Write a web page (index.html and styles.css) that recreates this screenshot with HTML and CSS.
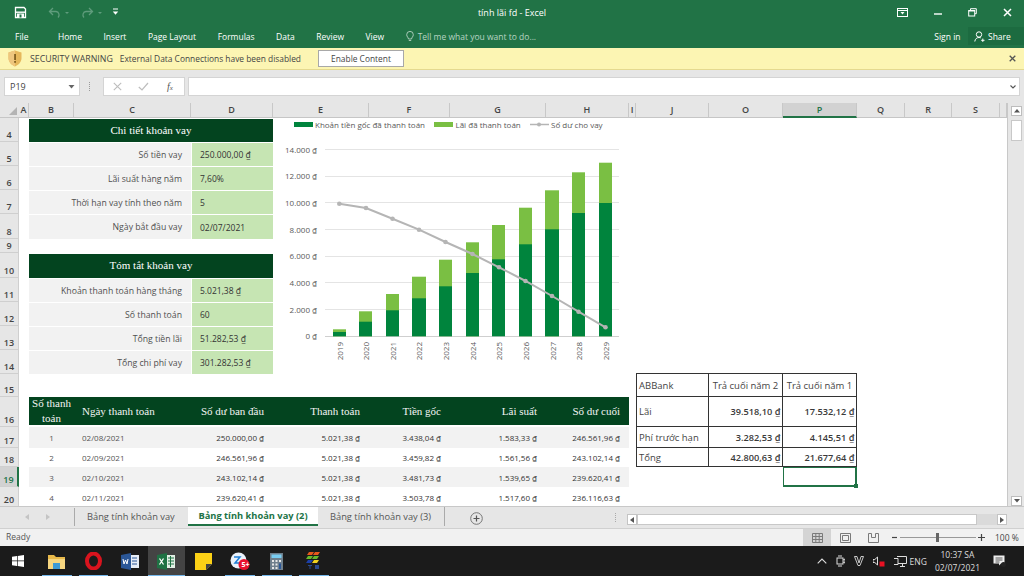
FILE: index.html
```html
<!DOCTYPE html>
<html lang="vi">
<head>
<meta charset="utf-8">
<title>tính lãi fd - Excel</title>
<link rel="stylesheet" href="styles.css">
</head>
<body>
<div class="app">
  <header class="titlebar">
    <div class="qat">
      <svg class="ico-save" width="13" height="13" viewBox="0 0 13 13"><path d="M1.500 1.500h8.500L11.500 3v8.500h-10z" fill="none" stroke="#fff" stroke-width="1.300"/><rect x="2" y="5.500" width="9" height="1.400" fill="#fff"/><rect x="3" y="7.500" width="7" height="4" fill="#fff"/><rect x="5.500" y="8.500" width="2" height="3" fill="#217346"/></svg>
      <svg class="ico-dim" width="23" height="11" viewBox="0 0 23 11"><path d="M5 1 1.500 4.500 5 8M2 4.500h6a3.500 3.500 0 0 1 2 6" fill="none" stroke="#5f9c7c" stroke-width="1.300"/><path d="M17 5h4l-2 2z" fill="#5f9c7c"/></svg>
      <svg class="ico-dim" width="23" height="11" viewBox="0 0 23 11"><path d="M8 1l3.500 3.500L8 8M11 4.500H5a3.500 3.500 0 0 0-2 6" fill="none" stroke="#5f9c7c" stroke-width="1.300"/><path d="M17 5h4l-2 2z" fill="#5f9c7c"/></svg>
      <svg class="ico-more" width="7" height="8" viewBox="0 0 7 8"><path d="M1 1h5" stroke="#fff"/><path d="M.8 3.500h5.400L3.500 6.800z" fill="#fff"/></svg>
    </div>
    <div class="doc-title">tính lãi fd - Excel</div>
    <div class="win">
      <svg width="11" height="9" viewBox="0 0 11 9"><rect x=".5" y=".5" width="10" height="8" fill="none" stroke="#fff"/><path d="M.5 2.500h10" stroke="#fff"/><path d="M3.500 4h4L5.500 6.500z" fill="#fff"/></svg>
      <svg width="8" height="9" viewBox="0 0 8 9"><path d="M0 6h8" stroke="#fff" stroke-width="1.400"/></svg>
      <svg width="9" height="9" viewBox="0 0 9 9"><path d="M2.500 2V.7h5.800v5H7" fill="none" stroke="#fff"/><rect x=".7" y="2.500" width="6" height="5.500" fill="none" stroke="#fff"/><path d="M.7 3h6" stroke="#fff"/></svg>
      <svg width="9" height="9" viewBox="0 0 9 9"><path d="M1 1l7 7M8 1 1 8" stroke="#fff" stroke-width="1.500"/></svg>
    </div>
  </header>

  <nav class="ribbon">
    <span class="rtab rtab-file">File</span>
    <span class="rtab">Home</span>
    <span class="rtab">Insert</span>
    <span class="rtab">Page Layout</span>
    <span class="rtab">Formulas</span>
    <span class="rtab">Data</span>
    <span class="rtab">Review</span>
    <span class="rtab">View</span>
    <span class="tell">
      <svg width="8" height="11" viewBox="0 0 8 11"><path d="M2.500 8C2.300 6.300.7 5.700.7 3.700a3.300 3.300 0 0 1 6.600 0C7.300 5.700 5.700 6.300 5.500 8zM2.800 9.500h2.400" fill="none" stroke="#b7d3c3" stroke-width=".9"/></svg>
      Tell me what you want to do...
    </span>
    <span class="signin">Sign in</span>
    <span class="share">
      <svg width="11" height="11" viewBox="0 0 11 11"><circle cx="5" cy="3.500" r="2.700" fill="none" stroke="#fff"/><path d="M.8 10.500C1 7.800 3 6.500 5 6.500c.8 0 1.300.2 1.800.4M7.200 9.300h3.300M8.800 7.600v3.300" fill="none" stroke="#fff"/></svg>
      Share
    </span>
  </nav>

  <div class="warn">
    <svg class="shield" width="14" height="17" viewBox="0 0 14 17"><path d="M7 .5 13.500 2.500V8c0 4-3 7-6.500 8.500C3.500 15 .5 12 .5 8V2.500z" fill="#e6b85c"/><path d="M7 .5V16.500C3.500 15 .5 12 .5 8V2.500z" fill="#eec67e"/><rect x="6.200" y="4" width="1.700" height="6" fill="#7a5a1c"/><rect x="6.200" y="11" width="1.700" height="1.800" fill="#7a5a1c"/></svg>
    <span class="warn-title">SECURITY WARNING</span>
    <span class="warn-msg">External Data Connections have been disabled</span>
    <button class="enable">Enable Content</button>
    <svg class="warn-x" width="7" height="7" viewBox="0 0 7 7"><path d="M.7.7l5.600 5.600M6.300.7.700 6.300" stroke="#555" stroke-width="1.300"/></svg>
  </div>

  <div class="fbar">
    <div class="namebox"><span>P19</span><svg width="7" height="4" viewBox="0 0 7 4"><path d="M.5 0h6L3.500 3.500z" fill="#666"/></svg></div>
    <div class="fdots"></div>
    <div class="fbtns">
      <svg width="9" height="9" viewBox="0 0 9 9"><path d="M.8.8l7.400 7.400M8.200.8.800 8.200" stroke="#bdbdbd" stroke-width="1.100"/></svg>
      <svg width="11" height="9" viewBox="0 0 11 9"><path d="M.8 5 4 8 10 1" fill="none" stroke="#bdbdbd" stroke-width="1.200"/></svg>
      <span class="fx">f<small>x</small></span>
    </div>
    <div class="finput"><svg width="6" height="4" viewBox="0 0 6 4"><path d="M.5.500 3 3 5.500.5" fill="none" stroke="#555" stroke-width="1.100"/></svg></div>
  </div>

  <div class="book">
    <div class="sheet">
      <div class="grid colhead">
        <div class="corner"><i></i></div>
        <div class="ch">A</div><div class="ch">B</div><div class="ch">C</div><div class="ch">D</div><div class="ch">E</div><div class="ch">F</div><div class="ch">G</div><div class="ch">H</div><div class="ch">I</div><div class="ch">J</div><div class="ch">O</div><div class="ch ch-sel">P</div><div class="ch">Q</div><div class="ch">R</div><div class="ch">S</div><div class="ch"></div>
      </div>

      <div class="grid h24"><div class="rh">4</div><div class="title">Chi tiết khoản vay</div></div>
      <div class="grid h24"><div class="rh">5</div><div class="lab">Số tiền vay</div><div class="val">250.000,00 ₫</div></div>
      <div class="grid h24"><div class="rh">6</div><div class="lab">Lãi suất hàng năm</div><div class="val">7,60%</div></div>
      <div class="grid h24"><div class="rh">7</div><div class="lab">Thời hạn vay tính theo năm</div><div class="val">5</div></div>
      <div class="grid h25"><div class="rh">8</div><div class="lab">Ngày bắt đầu vay</div><div class="val">02/07/2021</div></div>
      <div class="grid h14"><div class="rh">9</div></div>
      <div class="grid h25"><div class="rh">10</div><div class="title">Tóm tắt khoản vay</div></div>
      <div class="grid h24"><div class="rh">11</div><div class="lab">Khoản thanh toán hàng tháng</div><div class="val">5.021,38 ₫</div></div>
      <div class="grid h24"><div class="rh">12</div><div class="lab">Số thanh toán</div><div class="val">60</div></div>
      <div class="grid h24"><div class="rh">13</div><div class="lab">Tổng tiền lãi</div><div class="val">51.282,53 ₫</div></div>
      <div class="grid h24"><div class="rh">14</div><div class="lab">Tổng chi phí vay</div><div class="val">301.282,53 ₫</div></div>

      <div class="grid h23"><div class="rh">15</div>
        <div class="tb tb-top tb-first cj">ABBank</div><div class="tb tb-top ct co">Trả cuối năm 2</div><div class="tb tb-top ct cp">Trả cuối năm 1</div>
      </div>
      <div class="grid h30"><div class="rh">16</div>
        <div class="th cb th-c">Số thanh toán</div><div class="th cc th-l">Ngày thanh toán</div><div class="th cd">Số dư ban đầu</div><div class="th ce">Thanh toán</div><div class="th cf">Tiền gốc</div><div class="th cg">Lãi suất</div><div class="th chh">Số dư cuối</div>
        <div class="tb tb-first cj">Lãi</div><div class="tb num co">39.518,10 ₫</div><div class="tb num cp">17.532,12 ₫</div>
      </div>
      <div class="grid h21"><div class="rh">17</div>
        <div class="td z cb td-c">1</div><div class="td z cc td-l">02/08/2021</div><div class="td z cd">250.000,00 ₫</div><div class="td z ce">5.021,38 ₫</div><div class="td z cf">3.438,04 ₫</div><div class="td z cg">1.583,33 ₫</div><div class="td z chh">246.561,96 ₫</div>
        <div class="tb tb-first cj">Phí trước hạn</div><div class="tb num co">3.282,53 ₫</div><div class="tb num cp">4.145,51 ₫</div>
      </div>
      <div class="grid h19"><div class="rh">18</div>
        <div class="td cb td-c">2</div><div class="td cc td-l">02/09/2021</div><div class="td cd">246.561,96 ₫</div><div class="td ce">5.021,38 ₫</div><div class="td cf">3.459,82 ₫</div><div class="td cg">1.561,56 ₫</div><div class="td chh">243.102,14 ₫</div>
        <div class="tb tb-first cj">Tổng</div><div class="tb num co">42.800,63 ₫</div><div class="tb num cp">21.677,64 ₫</div>
      </div>
      <div class="grid h20"><div class="rh rh-sel">19</div>
        <div class="td z cb td-c">3</div><div class="td z cc td-l">02/10/2021</div><div class="td z cd">243.102,14 ₫</div><div class="td z ce">5.021,38 ₫</div><div class="td z cf">3.481,73 ₫</div><div class="td z cg">1.539,65 ₫</div><div class="td z chh">239.620,41 ₫</div>
        <div class="selcell cp"><i></i></div>
      </div>
      <div class="grid h20"><div class="rh">20</div>
        <div class="td cb td-c">4</div><div class="td cc td-l">02/11/2021</div><div class="td cd">239.620,41 ₫</div><div class="td ce">5.021,38 ₫</div><div class="td cf">3.503,78 ₫</div><div class="td cg">1.517,60 ₫</div><div class="td chh">236.116,63 ₫</div>
      </div>

      <svg class="chart" width="356" height="256" viewBox="273 118 356 256">
        <g class="leg">
          <rect x="294" y="122" width="19" height="5" fill="#00843d"/><text x="315" y="127.500">Khoản tiền gốc đã thanh toán</text>
          <rect x="434" y="122" width="19" height="5" fill="#7abf43"/><text x="455.500" y="127.500">Lãi đã thanh toán</text>
          <path d="M530 124.500h19" stroke="#b5b5b5" stroke-width="1.500"/><circle cx="539" cy="124.500" r="2" fill="#b5b5b5"/><text x="551" y="127.500">Số dư cho vay</text>
        </g>
        <g stroke="#e4e4e4" stroke-width="1">
          <path d="M325 149.500h294M325 176.500h294M325 202.500h294M325 229.500h294M325 256.500h294M325 282.500h294M325 309.500h294"/>
          <path d="M325 336.500h294" stroke="#cfcfcf"/>
        </g>
        <g class="ax" text-anchor="end">
          <text x="317" y="152.500">14.000 ₫</text><text x="317" y="179">12.000 ₫</text><text x="317" y="206">10.000 ₫</text><text x="317" y="232.500">8.000 ₫</text><text x="317" y="259">6.000 ₫</text><text x="317" y="285.500">4.000 ₫</text><text x="317" y="312.500">2.000 ₫</text><text x="317" y="339">0 ₫</text>
        </g>
        <g fill="#7abf43">
          <rect x="333" y="329.300" width="13" height="7"/><rect x="359" y="311.300" width="13" height="25"/><rect x="386" y="294" width="13" height="42"/><rect x="412" y="276.700" width="14" height="59.500"/><rect x="439" y="259.700" width="13" height="76.500"/><rect x="466" y="242.300" width="13" height="94"/><rect x="492" y="225" width="13" height="111"/><rect x="519" y="207.700" width="13" height="128.500"/><rect x="545" y="190.300" width="14" height="146"/><rect x="572" y="172.300" width="13" height="164"/><rect x="599" y="162.700" width="13" height="173.500"/>
        </g>
        <g fill="#00843d">
          <rect x="333" y="332" width="13" height="4.300"/><rect x="359" y="321.700" width="13" height="14.600"/><rect x="386" y="310.300" width="13" height="26"/><rect x="412" y="298.300" width="14" height="38"/><rect x="439" y="286.300" width="13" height="50"/><rect x="466" y="273" width="13" height="63.300"/><rect x="492" y="259.300" width="13" height="77"/><rect x="519" y="244.300" width="13" height="92"/><rect x="545" y="229.300" width="14" height="107"/><rect x="572" y="213" width="13" height="123.300"/><rect x="599" y="203" width="13" height="133.300"/>
        </g>
        <polyline points="339.300,203.700 366,208 392.500,218.700 419,229.700 445.500,242 472.500,254 499,267.300 525.500,281 552,296 578.500,311.700 605.500,327.300" fill="none" stroke="#b5b5b5" stroke-width="2"/>
        <g fill="#b5b5b5">
          <circle cx="339.300" cy="203.700" r="2.300"/><circle cx="366" cy="208" r="2.300"/><circle cx="392.500" cy="218.700" r="2.300"/><circle cx="419" cy="229.700" r="2.300"/><circle cx="445.500" cy="242" r="2.300"/><circle cx="472.500" cy="254" r="2.300"/><circle cx="499" cy="267.300" r="2.300"/><circle cx="525.500" cy="281" r="2.300"/><circle cx="552" cy="296" r="2.300"/><circle cx="578.500" cy="311.700" r="2.300"/><circle cx="605.500" cy="327.300" r="2.300"/>
        </g>
        <g class="ax" text-anchor="end">
          <text transform="translate(342.500 342) rotate(-90)">2019</text><text transform="translate(369 342) rotate(-90)">2020</text><text transform="translate(395.500 342) rotate(-90)">2021</text><text transform="translate(422 342) rotate(-90)">2022</text><text transform="translate(449 342) rotate(-90)">2023</text><text transform="translate(475.500 342) rotate(-90)">2024</text><text transform="translate(502 342) rotate(-90)">2025</text><text transform="translate(529 342) rotate(-90)">2026</text><text transform="translate(555.500 342) rotate(-90)">2027</text><text transform="translate(582 342) rotate(-90)">2028</text><text transform="translate(608.500 342) rotate(-90)">2029</text>
        </g>
      </svg>
    </div>
    <div class="vscroll">
      <div class="sbtn"><svg width="6" height="4" viewBox="0 0 6 4"><path d="M3 0l3 3.500H0z" fill="#555"/></svg></div>
      <div class="vthumb"></div>
      <div class="sbtn sbtn-end"><svg width="6" height="4" viewBox="0 0 6 4"><path d="M0 0h6L3 3.500z" fill="#555"/></svg></div>
    </div>
  </div>

  <div class="tabbar">
    <div class="tabnav">
      <svg width="4" height="6" viewBox="0 0 4 6"><path d="M4 0v6L0 3z" fill="#c4c4c4"/></svg>
      <svg width="4" height="6" viewBox="0 0 4 6"><path d="M0 0v6l4-3z" fill="#c4c4c4"/></svg>
    </div>
    <div class="stab stab-first">Bảng tính khoản vay</div>
    <div class="stab stab-on">Bảng tính khoản vay (2)</div>
    <div class="stab stab-last">Bảng tính khoản vay (3)</div>
    <svg class="addsheet" width="13" height="13" viewBox="0 0 13 13"><circle cx="6.500" cy="6.500" r="5.800" fill="none" stroke="#777"/><path d="M3.500 6.500h6M6.500 3.500v6" stroke="#555" stroke-width="1.200"/></svg>
    <div class="tabdots"></div>
    <div class="hscroll">
      <div class="hbtn"><svg width="4" height="6" viewBox="0 0 4 6"><path d="M4 0v6L0 3z" fill="#555"/></svg></div>
      <div class="hthumb"></div>
      <div class="hbtn"><svg width="4" height="6" viewBox="0 0 4 6"><path d="M0 0v6l4-3z" fill="#555"/></svg></div>
    </div>
  </div>

  <div class="status">
    <span class="ready">Ready</span>
    <div class="views">
      <span class="view view-on"><svg width="11" height="10" viewBox="0 0 11 10"><path d="M.5.500h10v9H.5zM.5 3.500h10M.5 6.500h10M3.800.5v9M7.200.5v9" fill="none" stroke="#7a7a7a"/></svg></span>
      <span class="view"><svg width="11" height="10" viewBox="0 0 11 10"><path d="M.5.500h10v9H.5zM2.500 2.500h6v5h-6z" fill="none" stroke="#7a7a7a"/></svg></span>
      <span class="view"><svg width="11" height="10" viewBox="0 0 11 10"><path d="M.5 9.500h10M.5.500v9M10.500.5v9M.5.500h3v4h4v-4h3" fill="none" stroke="#7a7a7a"/></svg></span>
    </div>
    <div class="zoom">
      <svg width="5" height="5" viewBox="0 0 5 5"><path d="M0 2.500h5" stroke="#444" stroke-width="1.200"/></svg>
      <div class="slider"><i></i></div>
      <svg width="7" height="7" viewBox="0 0 7 7"><path d="M0 3.500h7M3.500 0v7" stroke="#444" stroke-width="1.200"/></svg>
      <span class="pct">100 %</span>
    </div>
  </div>

  <footer class="taskbar">
    <svg class="winlogo" width="12" height="12" viewBox="0 0 12 12"><path d="M0 1.700 5 1v4.600H0zM5.700.9 12 0v5.600H5.700zM0 6.300h5V11l-5-.7zM5.700 6.300H12V12l-6.300-.9z" fill="#fff"/></svg>
    <div class="apps">
      <span class="app-i run"><svg width="17" height="15" viewBox="0 0 17 15"><path d="M0 1h6l2 2h9v12H0z" fill="#e8b94a"/><path d="M0 5h17v10H0z" fill="#f6d680"/><rect x="5" y="9" width="7" height="6" fill="#3d9ad6"/></svg></span>
      <span class="app-i run"><svg width="17" height="18" viewBox="0 0 17 18"><ellipse cx="8.500" cy="9" rx="6.500" ry="7.500" fill="none" stroke="#d9141e" stroke-width="4"/></svg></span>
      <span class="app-i"><svg width="18" height="17" viewBox="0 0 18 17"><rect x="6" y="2" width="12" height="13" fill="#e6edf7"/><path d="M11 5h5M11 8h5M11 11h5" stroke="#2b5797"/><path d="M0 2 10 0v17L0 15z" fill="#2b5797"/><path d="M2 6l1 5 1.500-4L6 11l1-5" fill="none" stroke="#fff"/></svg></span>
      <span class="app-i run run-on"><svg width="18" height="17" viewBox="0 0 18 17"><rect x="6" y="2" width="12" height="13" fill="#e2f0e6"/><path d="M11 5h6M11 8h6M11 11h6M13.500 3v11" stroke="#1f7244"/><path d="M0 2 10 0v17L0 15z" fill="#1f7244"/><path d="M2.500 5.500l4 6M6.500 5.500l-4 6" stroke="#fff" stroke-width="1.300"/></svg></span>
      <span class="app-i"><svg width="17" height="17" viewBox="0 0 17 17"><path d="M0 0h17v11l-6 6H0z" fill="#fcd116"/><path d="M17 11l-6 6v-6z" fill="#444"/></svg></span>
      <span class="app-i run"><svg width="20" height="18" viewBox="0 0 20 18"><circle cx="8.500" cy="8.500" r="8" fill="#eaf2fb"/><path d="M4 5h6L5 11h5" fill="none" stroke="#1f7fd6" stroke-width="1.500"/><circle cx="14" cy="12.500" r="5.500" fill="#e8112d"/></svg><b class="badge">5+</b></span>
      <span class="app-i run"><svg width="13" height="17" viewBox="0 0 13 17"><rect width="13" height="17" fill="#6f7f8c"/><rect x="1.500" y="1.500" width="10" height="3.500" fill="#79cdf2"/><path d="M2 7h2v2H2zM5.500 7h2v2h-2zM9 7h2v2H9zM2 10.500h2v2H2zM5.500 10.500h2v2h-2zM2 14h2v2H2zM5.500 14h2v2h-2z" fill="#e6e6e6"/><path d="M9 10.500h2V16H9z" fill="#2b5797"/></svg></span>
      <span class="app-i run"><svg width="15" height="18" viewBox="0 0 15 18"><path d="M3 0h5L6 3H1zM9 0h5l-2 3H7z" fill="#e8581c"/><path d="M2 4h5L5 7H0zM8 4h5l-2 3H6z" fill="#69b82c"/><path d="M2 8h5L5 11H0z" fill="#1c3fa8"/><path d="M8 8h5l-2 3H6z" fill="#f1d11f"/><path d="M2 13h4v1H4.500v3h-1v-3H2zM9 13h4v4H9z" fill="#2b4a8f"/></svg></span>
    </div>
    <div class="tray">
      <svg width="10" height="6" viewBox="0 0 10 6"><path d="M.7 5.300 5 1l4.300 4.300" fill="none" stroke="#ddd" stroke-width="1.100"/></svg>
      <svg width="9" height="12" viewBox="0 0 9 12"><rect x="1" y="3" width="6" height="6" fill="none" stroke="#ddd"/><path d="M2 1h4M2 11h4M7 5l2-1v4l-2-1" fill="none" stroke="#ddd"/></svg>
      <svg width="10" height="10" viewBox="0 0 10 10"><path d="M.5.500h2.500L5 7 7 .5h2.500L6 9.500H4z" fill="none" stroke="#ddd" stroke-width=".9"/></svg>
      <svg width="12" height="11" viewBox="0 0 12 11"><path d="M0 3.500h1.800L4.500 1v8L1.800 6.500H0z" fill="none" stroke="#ddd"/><rect x="6.500" y="5.500" width="5" height="5" fill="#e81123"/></svg>
      <svg width="13" height="11" viewBox="0 0 13 11"><path d="M3 .5h9.500v7H4M0 2.500h4v6H0M6 10.500h5M8.500 7.500v3" fill="none" stroke="#ddd"/></svg>
      <span class="lang">ENG</span>
      <div class="clock"><span>10:37 SA</span><span>02/07/2021</span></div>
      <svg class="notif" width="13" height="12" viewBox="0 0 13 12"><path d="M.5.500h11v8H8L6 10.500V8.500H.5z" fill="#eee"/><path d="M2.500 3h7M2.500 5h7M2.500 7h4" stroke="#333" stroke-width=".8"/><circle cx="10.500" cy="9.500" r="2.500" fill="#222"/></svg>
    </div>
  </footer>
</div>
</body>
</html>
```
FILE: styles.css
```css
* { box-sizing: border-box; }
html, body { margin: 0; padding: 0; }
body { width: 1024px; height: 576px; overflow: hidden; font-family: "Open Sans", "Noto Sans", sans-serif; font-size: 9px; color: #444; background: #e6e6e6; }
svg { display: block; flex: none; }
.app { width: 1024px; height: 576px; display: flex; flex-direction: column; }

.titlebar { height: 24px; background: #217346; color: #fff; display: flex; align-items: center; position: relative; padding-left: 14px; }
.qat { display: flex; align-items: center; gap: 10px; }
.ico-save { margin-right: 11px; }
.ico-more { margin-left: -2px; }
.doc-title { position: absolute; left: 0; right: 0; text-align: center; font-size: 9px; top: 6px; }
.win { margin-left: auto; display: flex; align-items: center; gap: 26px; padding-right: 12px; }

.ribbon { height: 24px; background: #217346; color: #fff; display: flex; align-items: center; padding-left: 15px; gap: 21.500px; font-size: 8.500px; }
.rtab-file { margin-right: 8px; }
.tell { display: flex; align-items: center; gap: 4px; color: #b7d3c3; }
.signin { margin-left: auto; margin-right: -14px; }
.share { width: 56px; height: 18px; background: #1c6b40; display: flex; align-items: center; gap: 3px; padding-left: 6px; }

.warn { height: 22px; background: #fcf5b3; border-bottom: 1px solid #e4d98f; display: flex; align-items: center; padding-left: 8px; font-size: 8.400px; color: #444; }
.shield { margin-right: 8px; }
.warn-title { margin-right: 7px; font-size: 8.800px; }
.enable { width: 86px; height: 17px; margin-left: 17px; background: #fff; border: 1px solid #a8a8a8; font: inherit; color: #444; padding: 0; }
.warn-x { margin-left: auto; margin-right: 8px; }

.fbar { height: 33px; background: #e6e6e6; display: flex; align-items: flex-start; padding: 7px 4px 0; }
.namebox { width: 76px; height: 19px; background: #fff; border: 1px solid #d4d4d4; display: flex; align-items: center; justify-content: space-between; padding: 0 4px 0 5px; font-size: 9px; }
.fdots { width: 3px; height: 9px; margin: 5px 11px 0 9px; border-left: 1px dotted #9a9a9a; }
.fbtns { width: 82px; height: 19px; background: #fff; border: 1px solid #d4d4d4; display: flex; align-items: center; gap: 16px; padding-left: 9px; }
.fx { font-family: "Liberation Serif", serif; font-style: italic; font-size: 10px; color: #555; margin-left: 2px; }
.fx small { font-size: 7px; }
.finput { flex: 1; height: 19px; margin-left: 3px; background: #fff; border: 1px solid #d4d4d4; display: flex; align-items: center; justify-content: flex-end; padding-right: 3px; }

.book { height: 404px; display: flex; border-bottom: 1px solid #c8c8c8; }
.sheet { width: 1007px; background: #fff; position: relative; overflow: hidden; }
.vscroll { flex: 1; background: #e6e6e6; padding: 3px 2px 0 3px; display: flex; flex-direction: column; border-left: 1px solid #c8c8c8; }
.sbtn { height: 10px; background: #fff; border: 1px solid #bdbdbd; display: flex; align-items: center; justify-content: center; flex: none; }
.sbtn-end { margin-top: auto; }
.vthumb { height: 21px; margin-top: 4px; background: #fff; border: 1px solid #c8c8c8; }

.grid { display: grid; grid-template-columns: [rh] 19px [a] 10px [b] 45px [c] 117px [d] 82px [e] 96px [f] 81px [g] 96px [h] 83px [i] 7px [j] 73px [o] 74px [p] 74px [q] 48px [r] 47px [s] 48px [t] 7px [end]; grid-template-rows: 100%; }
.colhead { height: 15px; background: #e6e6e6; border-bottom: 1px solid #c6c6c6; font-size: 9px; color: #444; font-weight: 600; }
.corner { position: relative; }
.corner i { position: absolute; right: 2px; bottom: 2px; border-style: solid; border-width: 0 0 8px 8px; border-color: transparent transparent #b4b4b4 transparent; }
.ch { text-align: center; line-height: 14px; border-right: 1px solid #c8c8c8; overflow: hidden; }
.ch-sel { background: #d2d2d2; color: #217346; border-bottom: 2px solid #217346; height: 15px; }

.h14 { height: 14px; } .h19 { height: 19px; } .h20 { height: 20px; } .h21 { height: 21px; } .h23 { height: 23px; } .h24 { height: 24px; } .h25 { height: 25px; } .h30 { height: 30px; }

.rh { grid-column: rh; background: #e6e6e6; border-bottom: 1px solid #cfcfcf; border-right: 1px solid #cfcfcf; display: flex; align-items: flex-end; justify-content: center; font-size: 9px; font-weight: 600; line-height: 13px; color: #444; }
.rh-sel { background: #d2d2d2; color: #217346; border-right: 2px solid #217346; }

.title { grid-column: b / e; background: #03441f; color: #fff; font-family: "Liberation Serif", serif; font-size: 11px; display: flex; align-items: center; justify-content: center; margin-top: 1px; padding-bottom: 2px; }
.lab { grid-column: b / d; background: #f2f2f2; border-top: 1px solid #fff; display: flex; align-items: center; justify-content: flex-end; padding-right: 9px; font-size: 8.700px; color: #505050; }
.val { grid-column: d; background: #c6e5b3; border-top: 1px solid #fff; border-left: 1px solid #fff; display: flex; align-items: center; padding-left: 8px; font-size: 8.500px; color: #333; }

.th { background: #03441f; color: #f4f4f4; font-family: "Liberation Serif", serif; font-size: 11px; display: flex; align-items: center; justify-content: flex-end; padding-right: 9px; line-height: 15px; margin-bottom: 2px; }
.th-c { justify-content: center; text-align: center; padding: 0; }
.th-l { justify-content: flex-start; padding-left: 8px; }
.td { display: flex; align-items: center; justify-content: flex-end; padding-right: 9px; font-size: 8px; color: #333; background: #fff; }
.td.z { background: #f2f2f2; }
.td-c { justify-content: center; padding: 0; color: #555; }
.td-l { justify-content: flex-start; padding: 0 0 0 8px; color: #555; }

.cb { grid-column: b; } .cc { grid-column: c; } .cd { grid-column: d; } .ce { grid-column: e; } .cf { grid-column: f; } .cg { grid-column: g; } .chh { grid-column: h; }
.cj { grid-column: j; } .co { grid-column: o; } .cp { grid-column: p; }

.tb { border-right: 1px solid #333; border-bottom: 1px solid #333; display: flex; align-items: center; padding: 0 1.500px 0 2px; font-size: 9.500px; color: #444; white-space: nowrap; }
.tb-first { border-left: 1px solid #333; padding-left: 2px; }
.tb-top { box-shadow: 0 -1px 0 #333; }
.ct { justify-content: center; padding: 0; }
.num { justify-content: flex-end; font-weight: 600; color: #3a3a3a; font-size: 9.200px; }
.selcell { border: 2px solid #217346; border-top-width: 1px; border-left-width: 1px; position: relative; }
.selcell i { position: absolute; right: -3px; bottom: -3px; width: 4px; height: 4px; background: #217346; }

.chart { position: absolute; left: 273px; top: 15px; }
.chart text { font-family: "Open Sans", "Noto Sans", sans-serif; }
.leg text { font-size: 8px; fill: #595959; }
.ax text { font-size: 8px; fill: #595959; }

.tabbar { height: 22px; background: #e6e6e6; display: flex; align-items: flex-start; border-bottom: 1px solid #d0d0d0; }
.tabnav { width: 75px; height: 18px; margin-top: 1px; border-right: 1px solid #aaa; display: flex; align-items: center; justify-content: center; gap: 17px; }
.stab { height: 19px; display: flex; align-items: center; font-size: 9.300px; color: #555; white-space: nowrap; }
.stab-first { width: 113px; padding-left: 12px; }
.stab-on { width: 130px; justify-content: center; background: #fff; color: #217346; font-weight: 700; border-bottom: 2px solid #217346; }
.stab-last { width: 127px; padding-left: 12px; border-right: 1px solid #aaa; }
.addsheet { margin: 5px 0 0 25px; }
.tabdots { width: 2px; height: 9px; margin: 6px 0 0 132px; border-left: 1px dotted #aaa; }
.hscroll { display: flex; align-items: stretch; margin: 7px 0 0 10px; width: 380px; height: 11px; background: #dadada; }
.hbtn { width: 10px; background: #fff; border: 1px solid #c4c4c4; display: flex; align-items: center; justify-content: center; flex: none; }
.hthumb { width: 340px; margin-right: 20px; background: #fff; border: 1px solid #c8c8c8; }

.status { height: 17px; background: #f1f1f1; display: flex; align-items: stretch; font-size: 8.500px; color: #555; }
.ready { padding-left: 6px; line-height: 16px; }
.views { margin-left: auto; display: flex; }
.view { width: 28px; display: flex; align-items: center; justify-content: center; }
.view-on { background: #d4d4d4; }
.zoom { display: flex; align-items: center; width: 137px; padding-left: 5px; color: #444; white-space: nowrap; }
.slider { width: 76px; height: 1px; margin: 0 2px 0 3px; background: #999; position: relative; flex: none; }
.slider i { position: absolute; left: 36px; top: -4px; width: 3px; height: 9px; background: #666; }
.pct { margin-left: 10px; font-size: 8.500px; }

.taskbar { flex: 1; background: #1b1b1b; display: flex; align-items: center; color: #ddd; padding-left: 12px; }
.apps { display: flex; margin-left: 14px; height: 30px; }
.app-i { position: relative; width: 36.700px; height: 30px; display: flex; align-items: center; justify-content: center; }
.app-i.run::after { content: ""; position: absolute; left: 4px; right: 3px; bottom: 0; height: 1px; background: #76b9ed; }
.run-on { background: #444; }
.app-i.run-on::after { left: 0; right: 0; }
.badge { position: absolute; left: 18px; top: 14px; width: 12px; text-align: center; font-size: 7px; line-height: 9px; color: #fff; font-weight: 700; }
.tray { margin-left: auto; display: flex; align-items: center; gap: 9px; padding-right: 18px; }
.lang { font-size: 8.500px; margin-left: -6px; }
.clock { display: flex; flex-direction: column; align-items: center; font-size: 8.500px; line-height: 13px; margin-left: -1px; }
.notif { margin-left: 4px; }
```
